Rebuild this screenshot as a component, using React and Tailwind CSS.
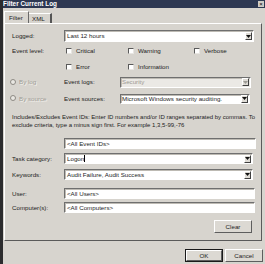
import React from 'react';

const font = { fontFamily: '"Liberation Sans", Arial, sans-serif' };

const Sunken = ({ className = '', children }) => (
  <div className={`flex items-center bg-white border border-t-[#6f6f6f] border-l-[#6f6f6f] border-b-white border-r-white shadow-[inset_1px_1px_0_#bdbab3] ${className}`}>
    {children}
  </div>
);

const Arrow = ({ disabled }) => (
  <div className="ml-auto mr-[1px] shrink-0 w-[7px] h-[8px] flex items-center justify-center bg-[#dedbd5] border border-t-white border-l-white border-b-[#404040] border-r-[#404040]">
    <svg width="5" height="3" viewBox="0 0 5 3">
      <path d="M0 0h5L2.5 3z" fill={disabled ? '#9c9a94' : '#111'} />
    </svg>
  </div>
);

const Check = ({ label }) => (
  <div className="flex items-center gap-[4px]">
    <div className="w-[6px] h-[6px] bg-white border border-t-[#5a5a5a] border-l-[#5a5a5a] border-b-[#e8e6e2] border-r-[#e8e6e2]" />
    <span>{label}</span>
  </div>
);

const Radio = ({ label }) => (
  <div className="flex items-center gap-[3px] text-[#a09d96] [text-shadow:1px_1px_0_#f2f0ec] whitespace-nowrap">
    <div className="w-[6px] h-[6px] shrink-0 rounded-full bg-[#e9e7e2] border border-[#8d8a84]" />
    <span>{label}</span>
  </div>
);

const Btn = ({ children, def, className = '' }) => (
  <div className={`${def ? 'border border-[#1a1a1a]' : ''} ${className}`}>
    <div className="h-full flex items-center justify-center bg-[#dcd9d3] border border-t-white border-l-white border-b-[#5e5e5e] border-r-[#5e5e5e]">
      {children}
    </div>
  </div>
);

export default function App() {
  return (
    <div style={font} className="w-[265px] h-[264px] bg-[#d7d4ce] border-l-[3px] border-[#2c2c2e] flex flex-col text-[6.2px] text-[#1c1c1c] overflow-hidden">
      {/* title bar */}
      <div className="h-[8px] bg-[#2d3852] flex items-center pr-[1px]">
        <span className="text-white font-bold text-[6.4px] leading-none">Filter Current Log</span>
        <div className="ml-auto w-[6px] h-[6px] bg-[#cfccc5] flex items-center justify-center text-[6px] leading-none text-black">×</div>
      </div>

      {/* tabs */}
      <div className="flex items-end mt-[3px] pl-[1px] h-[12px]">
        <div className="h-[12px] w-[25px] flex items-center pl-[4px] border-t border-l border-white border-r border-r-[#6a6a6a] bg-[#d9d6d0]">Filter</div>
        <div className="h-[10px] w-[23px] flex items-center pl-[3px] border-t border-white border-r-2 border-r-[#555]">XML</div>
      </div>

      {/* panel */}
      <div className="ml-[1px] w-[258px] h-[218px] border border-t-white border-l-white border-r-[#5a5a5a] border-b-[#5a5a5a] flex flex-col pl-[7px]">
        <div className="flex items-center mt-[6px] h-[12px]">
          <span className="w-[52px]">Logged:</span>
          <Sunken className="w-[190px] h-[12px] pl-[2px]">
            <span>Last 12 hours</span>
            <Arrow />
          </Sunken>
        </div>

        <div className="flex mt-[5px] h-[8px] items-center">
          <span className="w-[54px]">Event level:</span>
          <div className="w-[62px]"><Check label="Critical" /></div>
          <div className="w-[66px]"><Check label="Warning" /></div>
          <Check label="Verbose" />
        </div>
        <div className="flex mt-[8px] h-[8px] items-center">
          <span className="w-[54px]" />
          <div className="w-[62px]"><Check label="Error" /></div>
          <Check label="Information" />
        </div>

        <div className="flex items-center mt-[5px] h-[12px]">
          <div className="w-[52px] -ml-[2px] pr-[2px]"><Radio label="By log" /></div>
          <span className="w-[58px] pl-[2px]">Event logs:</span>
          <Sunken className="w-[131px] h-[11px] pl-[1px] !bg-[#ebe9e5] text-[#9d9a93]">
            <span>Security</span>
            <Arrow disabled />
          </Sunken>
        </div>

        <div className="flex items-center mt-[5px] h-[11px]">
          <div className="w-[52px] -ml-[2px] pr-[2px]"><Radio label="By source" /></div>
          <span className="w-[58px] pl-[2px]">Event sources:</span>
          <Sunken className="w-[130px] h-[10px] pl-[1px] overflow-hidden">
            <span className="whitespace-nowrap">Microsoft Windows security auditing.</span>
            <Arrow />
          </Sunken>
        </div>

        <div className="mt-[10px] leading-[7.5px] whitespace-nowrap text-[6px]">
          <div>Includes/Excludes Event IDs: Enter ID numbers and/or ID ranges separated by commas. To</div>
          <div>exclude criteria, type a minus sign first. For example 1,3,5-99,-76</div>
        </div>

        <div className="flex items-center mt-[9px] h-[11px]">
          <span className="w-[52px]" />
          <Sunken className="w-[192px] h-[11px] pl-[2px]"><span>&lt;All Event IDs&gt;</span></Sunken>
        </div>

        <div className="flex items-center mt-[4px] h-[11px]">
          <span className="w-[52px]">Task category:</span>
          <Sunken className="w-[189px] h-[11px] pl-[2px]">
            <span>Logon</span><span className="w-[1px] h-[7px] bg-black" />
            <Arrow />
          </Sunken>
        </div>

        <div className="flex items-center mt-[5px] h-[11px]">
          <span className="w-[52px]">Keywords:</span>
          <Sunken className="w-[189px] h-[11px] pl-[2px]">
            <span>Audit Failure, Audit Success</span>
            <Arrow />
          </Sunken>
        </div>

        <div className="flex items-center mt-[8px] h-[11px]">
          <span className="w-[52px]">User:</span>
          <Sunken className="w-[191px] h-[11px] pl-[2px]"><span>&lt;All Users&gt;</span></Sunken>
        </div>

        <div className="flex items-center mt-[3px] h-[11px]">
          <span className="w-[52px]">Computer(s):</span>
          <Sunken className="w-[191px] h-[11px] pl-[2px]"><span>&lt;All Computers&gt;</span></Sunken>
        </div>

        <div className="flex mt-[7px] pl-[202px]">
          <Btn className="w-[38px] h-[13px]">Clear</Btn>
        </div>
      </div>

      {/* bottom buttons */}
      <div className="flex justify-end gap-[2px] mt-[8px] pr-[2px]">
        <Btn def className="w-[38px] h-[13px]">OK</Btn>
        <Btn className="w-[38px] h-[13px]">Cancel</Btn>
      </div>
    </div>
  );
}
